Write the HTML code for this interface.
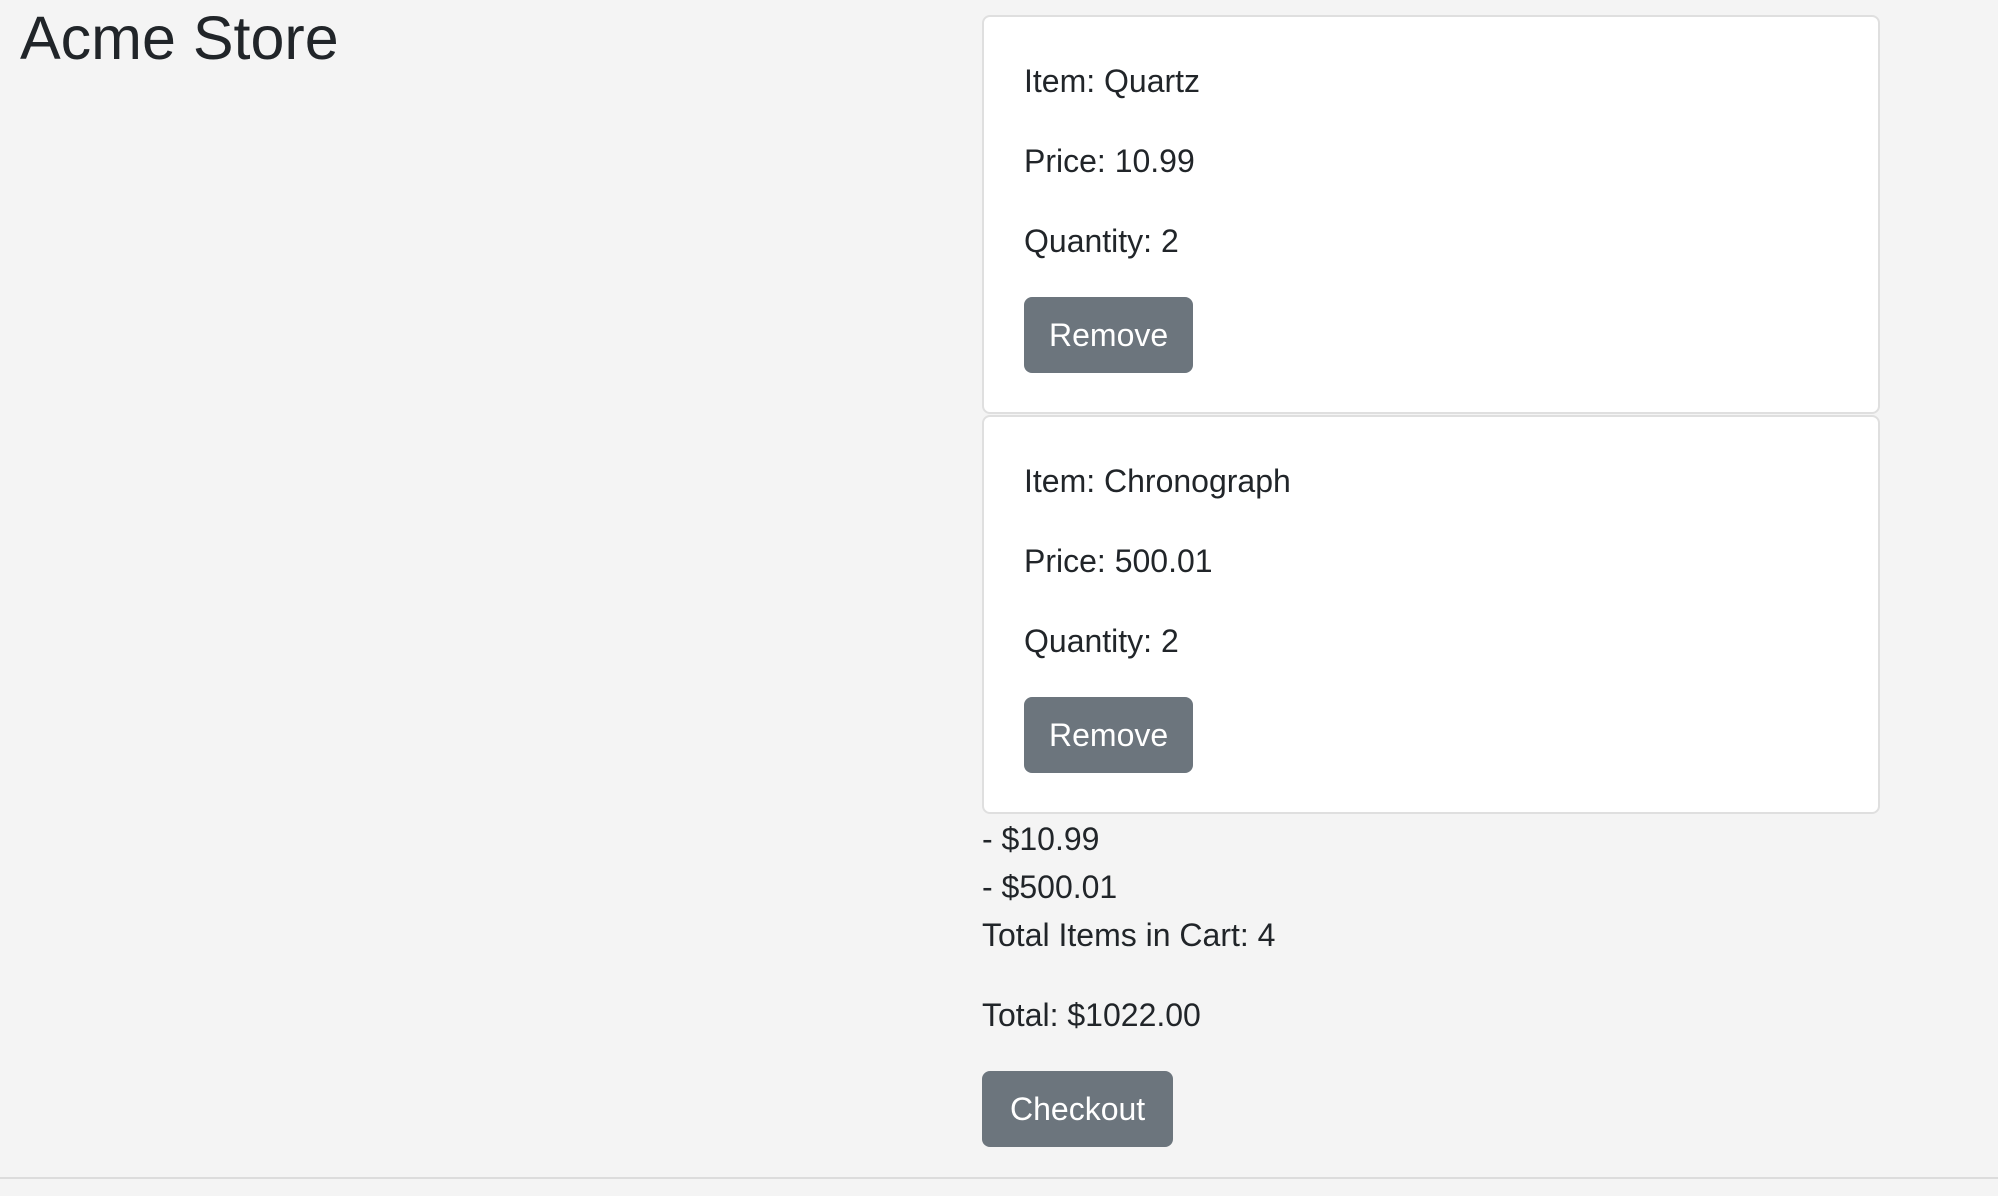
<!DOCTYPE html>
<html><head><meta charset="utf-8"><style>
*{box-sizing:border-box;margin:0;padding:0}
body{width:1998px;height:1196px;background:#f4f4f4;font-family:"Liberation Sans",sans-serif;color:#212529;font-size:32px;line-height:48px;position:relative;overflow:hidden}
h1{position:absolute;left:20px;top:1px;font-size:61px;font-weight:500;line-height:74px;color:#212529}
.col{position:absolute;left:982px;top:15px;width:898px}
.card{background:#fff;border:2px solid #dfdfdf;border-radius:8px;padding:40px 40px;height:399px;margin-bottom:1px}
.card p{margin-bottom:32px}
.btn{display:inline-block;background:#6c757d;color:#fff;border-radius:8px;height:76px;line-height:76px;padding:0 25px;font-size:32px}
.m{margin-bottom:32px}
.line{position:absolute;left:0;top:1177px;width:1998px;height:2px;background:#dcdcdc}
</style></head><body>
<h1>Acme Store</h1>
<div class="col">
<div class="card"><p>Item: Quartz</p><p>Price: 10.99</p><p>Quantity: 2</p><span class="btn">Remove</span></div>
<div class="card"><p>Item: Chronograph</p><p>Price: 500.01</p><p>Quantity: 2</p><span class="btn">Remove</span></div>
<div>- $10.99</div>
<div>- $500.01</div>
<div class="m">Total Items in Cart: 4</div>
<div class="m">Total: $1022.00</div>
<span class="btn" style="padding:0 28px">Checkout</span>
</div>
<div class="line"></div>
</body></html>
